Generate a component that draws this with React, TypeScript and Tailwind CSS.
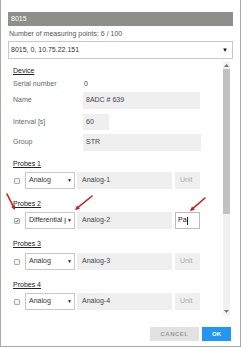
import React from "react";

const font = { fontFamily: '"Liberation Sans", Arial, sans-serif' };

function Select({ label, w = "w-[50px]" }: { label: string; w?: string }) {
  return (
    <div className={`${w} h-[17px] border border-[#c8c8c8] bg-white flex items-center pl-[3px] pr-[2px] shrink-0`}>
      <span className="text-[7px] text-[#333] flex-1 min-w-0 overflow-hidden whitespace-nowrap">{label}</span>
      <span className="text-[5px] text-[#222] ml-[1px] shrink-0">▼</span>
    </div>
  );
}

function Checkbox({ checked }: { checked?: boolean }) {
  return (
    <div className="w-[17px] flex items-center justify-center shrink-0">
      <div className="w-[6px] h-[6px] rounded-[1px] border border-[#aaa] bg-[#f4f4f4] flex items-center justify-center">
        {checked && (
          <svg width="6" height="6" viewBox="0 0 6 6">
            <path d="M0.8 3 L2.4 4.6 L5.2 1" stroke="#333" strokeWidth="1.1" fill="none" />
          </svg>
        )}
      </div>
    </div>
  );
}

function ProbeRow({ type, name, unit, checked, unitActive }: { type: string; name: string; unit: string; checked?: boolean; unitActive?: boolean }) {
  return (
    <div className="flex items-center h-[17px]">
      <Checkbox checked={checked} />
      <Select label={type} />
      <div className="ml-[2px] w-[95px] h-[17px] bg-[#efefef] flex items-center pl-[5px] text-[7px] text-[#444]">{name}</div>
      <div
        className={`ml-[3px] w-[25px] h-[17px] flex items-center text-[7px] ${
          unitActive ? "bg-white border border-[#bbb] pl-[2px] text-[#222]" : "bg-[#efefef] pl-[5px] text-[#aaa]"
        }`}
      >
        {unit}
        {unitActive && <span className="w-[1px] h-[8px] bg-[#222]" />}
      </div>
    </div>
  );
}

function SectionTitle({ children }: { children: React.ReactNode }) {
  return <div className="text-[7px] text-[#222] underline leading-[9px]">{children}</div>;
}

function Arrow({ x1, y1, x2, y2 }: { x1: number; y1: number; x2: number; y2: number }) {
  const ang = Math.atan2(y2 - y1, x2 - x1);
  const len = 5;
  const a1 = ang + Math.PI - 0.45;
  const a2 = ang + Math.PI + 0.45;
  const p1 = `${x2 + len * Math.cos(a1)},${y2 + len * Math.sin(a1)}`;
  const p2 = `${x2 + len * Math.cos(a2)},${y2 + len * Math.sin(a2)}`;
  return (
    <g>
      <line x1={x1} y1={y1} x2={x2 - 2 * Math.cos(ang)} y2={y2 - 2 * Math.sin(ang)} stroke="#c8201e" strokeWidth="1.6" strokeLinecap="round" />
      <polygon points={`${x2},${y2} ${p1} ${p2}`} fill="#c8201e" />
    </g>
  );
}

export default function App() {
  return (
    <div style={font} className="relative w-[241px] h-[348px] bg-white overflow-hidden">
      <div className="absolute left-0 top-0 w-[241px] h-[347px] border-l border-r border-b border-[#a8a8a8]" />
      <div className="relative flex flex-col px-[8px] pt-[12px] w-[241px] h-[347px]">
        <div className="h-[14px] bg-[#8e8e8a] flex items-center pl-[3px] text-[7px] text-white">8015</div>
        <div className="mt-[3px] pl-[1px] text-[7px] text-[#555] leading-[10px]">Number of measuring points: 6 / 100</div>
        <div className="mt-[2px] h-[18px] border border-[#c8c8c8] flex items-center pl-[2px] pr-[4px]">
          <span className="flex-1 text-[7px] text-[#333]">8015, 0, 10.75.22.151</span>
          <span className="text-[6px] text-[#111]">▼</span>
        </div>
        <div className="flex mt-[3px] h-[253px]">
          <div className="flex-1 flex flex-col pl-[5px] pt-[4px]">
            <SectionTitle>Device</SectionTitle>
            <div className="mt-[4px] flex items-center h-[10px] text-[7px]">
              <span className="w-[70px] text-[#666]">Serial number</span>
              <span className="text-[#444] pl-[1px]">0</span>
            </div>
            <div className="mt-[3px] flex items-center text-[7px]">
              <span className="w-[70px] text-[#666]">Name</span>
              <div className="w-[117px] h-[17px] bg-[#efefef] flex items-center pl-[3px] text-[#444]">8ADC # 639</div>
            </div>
            <div className="mt-[5px] flex items-center text-[7px]">
              <span className="w-[70px] text-[#666]">Interval [s]</span>
              <div className="w-[26px] h-[16px] bg-[#efefef] flex items-center pl-[3px] text-[#444]">60</div>
            </div>
            <div className="mt-[4px] flex items-center text-[7px]">
              <span className="w-[70px] text-[#666]">Group</span>
              <div className="w-[118px] h-[17px] bg-[#efefef] flex items-center pl-[3px] text-[#444]">STR</div>
            </div>
            <div className="mt-[8px]">
              <SectionTitle>Probes 1</SectionTitle>
            </div>
            <div className="mt-[4px] -ml-[5px]">
              <ProbeRow type="Analog" name="Analog-1" unit="Unit" />
            </div>
            <div className="mt-[10px]">
              <SectionTitle>Probes 2</SectionTitle>
            </div>
            <div className="mt-[4px] -ml-[5px]">
              <ProbeRow type="Differential pressure" name="Analog-2" unit="Pa" checked unitActive />
            </div>
            <div className="mt-[10px]">
              <SectionTitle>Probes 3</SectionTitle>
            </div>
            <div className="mt-[5px] -ml-[5px]">
              <ProbeRow type="Analog" name="Analog-3" unit="Unit" />
            </div>
            <div className="mt-[10px]">
              <SectionTitle>Probes 4</SectionTitle>
            </div>
            <div className="mt-[4px] -ml-[5px]">
              <ProbeRow type="Analog" name="Analog-4" unit="Unit" />
            </div>
          </div>
          <div className="w-[7px] mr-[3px] bg-[#f1f1f1] flex flex-col">
            <div className="h-[7px] flex items-center justify-center">
              <svg width="5" height="3" viewBox="0 0 5 3"><polygon points="2.5,0 5,3 0,3" fill="#777" /></svg>
            </div>
            <div className="h-[145px] mx-[0px] bg-[#c1c1c1]" />
            <div className="flex-1" />
            <div className="h-[7px] flex items-center justify-center">
              <svg width="5" height="3" viewBox="0 0 5 3"><polygon points="0,0 5,0 2.5,3" fill="#777" /></svg>
            </div>
          </div>
        </div>
        <div className="mt-[12px] flex justify-end pr-[2px] gap-[3px]">
          <div className="w-[49px] h-[14px] bg-[#e2e2e2] flex items-center justify-center text-[6px] tracking-[0.5px] text-[#9a9a9a] font-bold">CANCEL</div>
          <div className="w-[29px] h-[14px] bg-[#2196f3] flex items-center justify-center text-[6px] text-white font-bold">OK</div>
        </div>
      </div>
      <svg className="absolute left-0 top-0 pointer-events-none" width="241" height="348">
        <Arrow x1={7} y1={194} x2={15} y2={210} />
        <Arrow x1={92} y1={196} x2={75} y2={210} />
        <Arrow x1={205} y1={198} x2={190} y2={211} />
      </svg>
    </div>
  );
}
